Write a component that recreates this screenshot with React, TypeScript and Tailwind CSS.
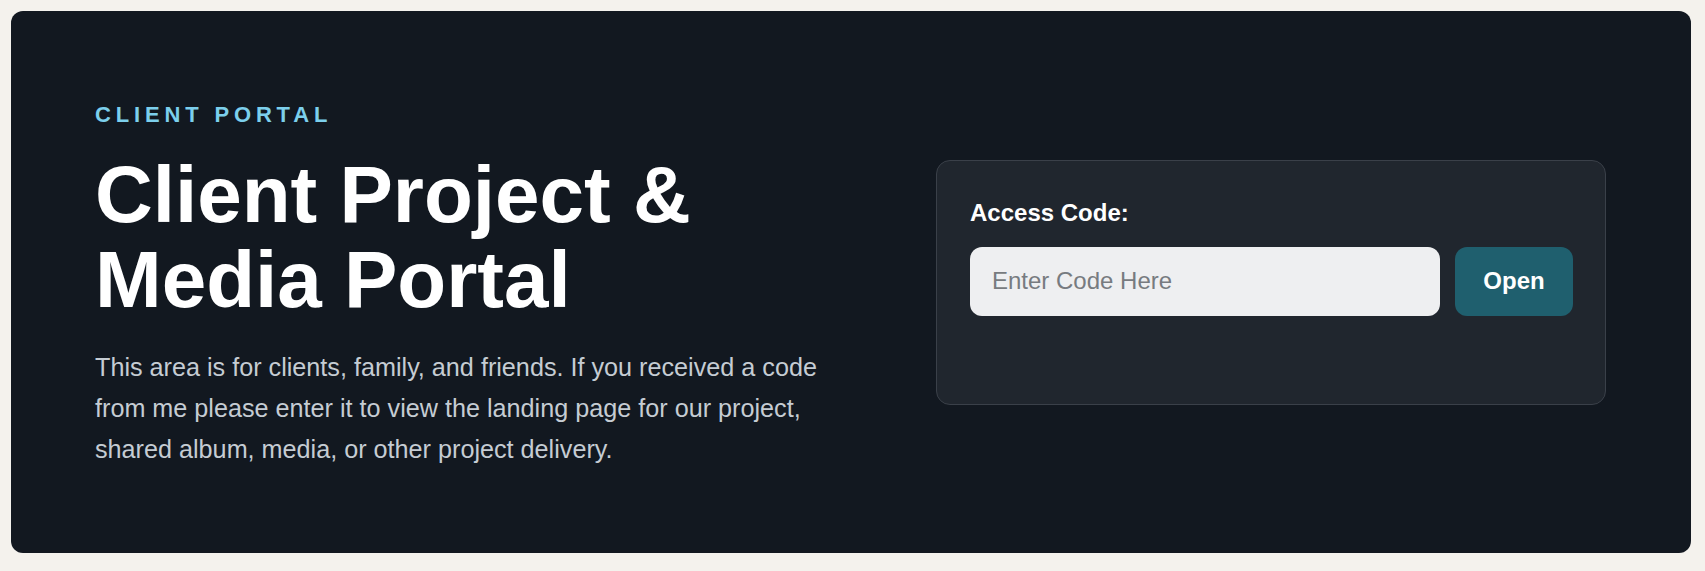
// Client portal hero: intro copy on the left, access-code card on the right.
import { useState } from "react";

export default function App() {
  const [code, setCode] = useState("");

  return (
    <div className="min-h-[571px] bg-[#f4f2ed] pt-[11px] pl-[11px] pr-[14px] pb-[18px] font-['Liberation_Sans',Arial,sans-serif]">
      <section className="h-[542px] rounded-[12px] bg-[#121820] pl-[84px] pr-[85px] flex items-center justify-between">
        {/* 안내 문구 */}
        <div className="w-[760px] pt-[8px]">
          <p className="text-[22px] leading-[26px] font-bold tracking-[0.22em] text-[#7ccfec]">
            CLIENT PORTAL
          </p>
          <h1 className="mt-[24px] w-[640px] text-[80px] leading-[85px] font-bold text-white">
            Client Project &amp; Media Portal
          </h1>
          <p className="mt-[25px] w-[740px] text-[25.2px] leading-[40.8px] text-[#c5ccd3]">
            This area is for clients, family, and friends. If you received a code from me please enter it to view
            the landing page for our project, shared album, media, or other project delivery.
          </p>
        </div>

        {/* 코드 입력 카드 */}
        <div className="w-[670px] rounded-[14px] border border-[#3a4049] bg-[#20262e] pl-[33px] pr-[32px] pt-[38px] pb-[88px]">
          <label htmlFor="code" className="block text-[24px] leading-[28px] font-bold text-white">
            Access Code:
          </label>
          <div className="mt-[20px] flex gap-[15px]">
            <input
              id="code"
              value={code}
              onChange={(e) => setCode(e.target.value)}
              placeholder="Enter Code Here"
              className="flex-1 min-w-0 h-[69px] rounded-[12px] bg-[#eeeff1] px-[22px] text-[24px] text-[#222] placeholder:text-[#777b80] outline-none"
            />
            <button
              type="button"
              className="w-[118px] h-[69px] rounded-[12px] bg-[#1f5f6e] text-[24px] font-bold text-white cursor-pointer"
            >
              Open
            </button>
          </div>
        </div>
      </section>
    </div>
  );
}
